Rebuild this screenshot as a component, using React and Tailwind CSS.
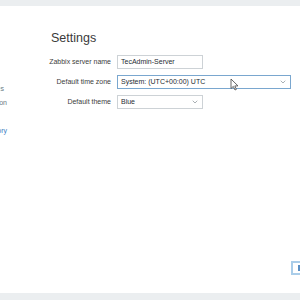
import { ChevronDown } from 'lucide-react';

const font = { fontFamily: '"Liberation Sans", Arial, sans-serif' };

function Field({ label, children }) {
  return (
    <div className="flex items-center h-[14px]">
      <div className="w-[111px] shrink-0 text-right text-[7px] text-[#3d3d3d] whitespace-nowrap">{label}</div>
      <div className="ml-[6px]">{children}</div>
    </div>
  );
}

function Select({ value, width, focused }) {
  return (
    <div
      className={`flex items-center justify-between h-[14px] bg-white border px-[3px] text-[7px] text-[#1f2c33] ${
        focused ? 'border-[#7aa7cf]' : 'border-[#cdd2d6]'
      }`}
      style={{ width }}
    >
      <span className="whitespace-nowrap">{value}</span>
      <ChevronDown size={8} strokeWidth={1.6} className="text-[#5f6a72]" />
    </div>
  );
}

function Cursor() {
  return (
    <svg width="9" height="13" viewBox="0 0 9 13" className="absolute left-[230px] top-[78px]">
      <path d="M1 1 L1 10.5 L3.3 8.4 L5 12 L6.4 11.3 L4.8 7.9 L8 7.9 Z" fill="#fff" stroke="#555" strokeWidth="0.9" strokeLinejoin="round" />
    </svg>
  );
}

export default function App() {
  return (
    <div className="relative w-[300px] h-[300px] overflow-hidden bg-white flex flex-col" style={font}>
      <div className="h-[6px] bg-[#ebeef0] shrink-0" />

      <div className="flex-1 flex min-h-0">
        <div className="w-[8px] shrink-0 overflow-hidden flex flex-col items-end pt-[76px] text-[7px]">
          <div className="whitespace-nowrap text-[#6a7983] leading-[14px] mr-[4px]">Proxies</div>
          <div className="whitespace-nowrap text-[#6a7983] leading-[14px] mr-[1px]">Authentication</div>
          <div className="whitespace-nowrap text-[#3d7cbf] leading-[14px] mt-[14px] mr-[1px]">Inventory</div>
        </div>

        <div className="flex-1 flex flex-col">
          <h1 className="ml-[43px] mt-[24px] text-[12.5px] text-[#3a3a3a] leading-[16px]">Settings</h1>
          <div className="mt-[9px] flex flex-col gap-[6px] -ml-[8px]">
            <Field label="Zabbix server name">
              <div className="h-[14px] w-[86px] border border-[#cdd2d6] px-[3px] flex items-center text-[7px] text-[#1f2c33] whitespace-nowrap">
                TecAdmin-Server
              </div>
            </Field>
            <Field label="Default time zone">
              <Select value="System: (UTC+00:00) UTC" width={174} focused />
            </Field>
            <Field label="Default theme">
              <Select value="Blue" width={86} />
            </Field>
          </div>

          <div className="mt-auto mb-[18px] pl-[283px]">
            <div className="h-[14px] w-[40px] border-2 border-[#aacde9] bg-white flex items-center pl-[5px]">
              <div className="w-[4px] h-[6px] bg-[#5a8fc4]" />
            </div>
          </div>
        </div>
      </div>

      <div className="h-[7px] bg-[#ebeef0] shrink-0" />
      <Cursor />
    </div>
  );
}
